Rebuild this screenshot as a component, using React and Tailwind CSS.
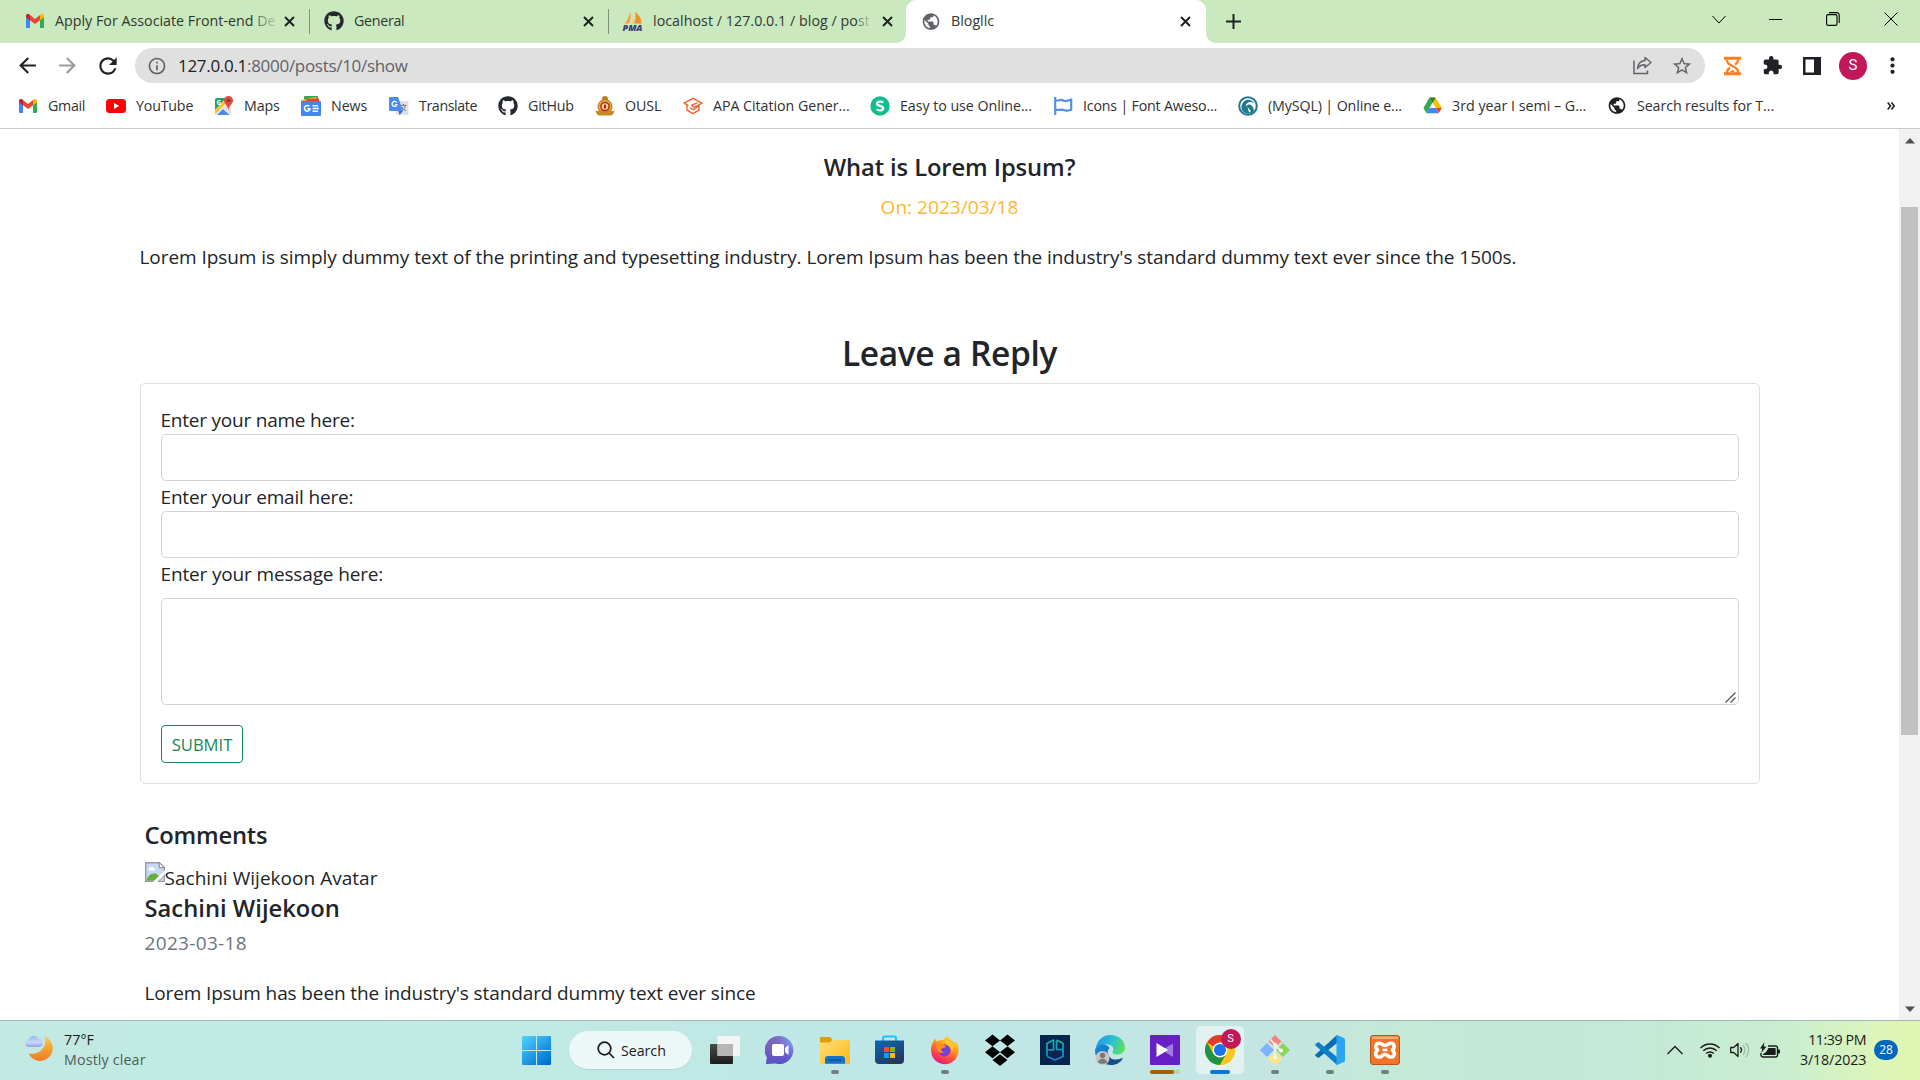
import React from 'react';
import { FaGithub, FaDropbox } from 'react-icons/fa';
import {
  MdArrowBack,
  MdArrowForward,
  MdRefresh,
  MdInfoOutline,
  MdStarBorder,
  MdExtension,
  MdMoreVert,
  MdPublic,
} from 'react-icons/md';

/* ---------- favicons ---------- */

const Gmail = () => (
  <svg width="18" height="14" viewBox="0 0 18 14" className="shrink-0">
    <path d="M0 2v11a1 1 0 0 0 1 1h3V5z" fill="#4285f4" />
    <path d="M18 2v11a1 1 0 0 1-1 1h-3V5z" fill="#34a853" />
    <path d="M4 1l5 4 5-4v5.2L9 10 4 6.200z" fill="#ea4335" />
    <path d="M14 1l1-.7c1.300-1 3 0 3 1.600V3.200l-4 3z" fill="#fbbc04" />
    <path d="M4 1L3 .3C1.700-.7 0 .3 0 1.900V3.200l4 3z" fill="#c5221f" />
  </svg>
);

const YouTube = () => (
  <svg width="20" height="20" viewBox="0 0 20 20" className="shrink-0">
    <rect x="0" y="3" width="20" height="14" rx="3.500" fill="#f00" />
    <path d="M8 7l5.200 3L8 13z" fill="#fff" />
  </svg>
);

const Maps = () => (
  <svg width="20" height="20" viewBox="0 0 20 20" className="shrink-0">
    <rect x="1" y="2" width="16" height="17" rx="2" fill="#e8eaed" />
    <path d="M1 4a2 2 0 0 1 2-2h9L1 14z" fill="#1ea362" />
    <path d="M1 14L13 2l2 2L1 18.500z" fill="#fbc02d" />
    <path d="M3 19l6-6 6.500 6z" fill="#4a89f3" />
    <path d="M10 12l3-3 4 4v4z" fill="#dadce0" />
    <text x="2.500" y="9" fontSize="6.500" fill="#fff" fontWeight="700" fontFamily="Open Sans">G</text>
    <path d="M14.500 0a4.500 4.500 0 0 1 4.500 4.500c0 3.500-3.800 4.500-4.500 9.500-.7-5-4.500-6-4.500-9.500A4.500 4.500 0 0 1 14.500 0z" fill="#dd4b3e" />
    <circle cx="14.500" cy="4.500" r="1.600" fill="#822f2b" />
  </svg>
);

const News = () => (
  <svg width="20" height="20" viewBox="0 0 20 20" className="shrink-0">
    <rect x="3" y="0" width="14" height="8" rx="1" fill="#34a853" />
    <path d="M0 4l15-3 2 7H1z" fill="#fbbc04" />
    <path d="M5 3l13-.5V8H6z" fill="#ea4335" />
    <rect x="0" y="5" width="20" height="15" rx="1" fill="#4285f4" />
    <path d="M8.300 10.400A2.800 2.800 0 1 0 9 12.800H6.300" fill="none" stroke="#fff" strokeWidth="1.600" />
    <path d="M11.500 9.700H17M11.500 12.500H17.800M11.500 15.300H17" stroke="#fff" strokeWidth="1.500" />
  </svg>
);

const Translate = () => (
  <svg width="20" height="20" viewBox="0 0 20 20" className="shrink-0">
    <rect x="7" y="5" width="12.500" height="14" rx="1.200" fill="#dfe1e5" />
    <path d="M1.200 1H9l5 14H1.200A1.200 1.200 0 0 1 0 13.800V2.200A1.200 1.200 0 0 1 1.200 1z" fill="#4c8bf5" />
    <path d="M9.500 15H14l-3.500 4z" fill="#3367d6" />
    <path d="M7.700 6.600a2.500 2.500 0 1 0 .3 2H5.800" fill="none" stroke="#fff" strokeWidth="1.200" />
    <path d="M11.500 9.300h6M14.500 8v1.300M16.500 9.500c-.5 2.500-2 4-3.800 5M13 11c.8 2 2.300 3 4 3.800" fill="none" stroke="#6b7785" strokeWidth="1" />
  </svg>
);

const Ousl = () => (
  <svg width="20" height="20" viewBox="0 0 20 20" className="shrink-0">
    <path d="M7 2.500a3 2.500 0 0 1 6 0l-.5 3h-5z" fill="#b8862a" />
    <circle cx="10" cy="10.500" r="7" fill="#e8a82c" stroke="#b8731a" />
    <path d="M.5 14.500c1.500 1 3 .5 4-.5h11c1 1 2.500 1.500 4 .5-.5 3-2 5-4.500 5H5c-2.500 0-4-2-4.500-5z" fill="#c98a24" />
    <circle cx="10" cy="10.500" r="4.800" fill="#b3301c" />
    <circle cx="10" cy="10.500" r="3.300" fill="#f0d9b0" />
    <path d="M10 7.800c2 2.200 2 4.400 0 5.200-2-.8-2-3 0-5.200z" fill="#c62a1b" />
  </svg>
);

const Citation = () => (
  <svg width="20" height="20" viewBox="0 0 20 20" className="shrink-0" fill="none" stroke="#f4602f" strokeWidth="1.400" strokeLinejoin="round" strokeLinecap="round">
    <path d="M5 9.500L1 7.200 10 2.300l9 4.900-6.300 3.500a2.700 2.700 0 0 1-4-1.500l5.300-2.300" />
    <path d="M4 9v5.200l5.800 3.500 6.200-3.500V9.500l-5.500 4.200L7.500 12" />
  </svg>
);

const Shutter = () => (
  <svg width="20" height="20" viewBox="0 0 20 20" className="shrink-0">
    <circle cx="10" cy="10" r="9.700" fill="#0dbf8c" />
    <path d="M13.300 6.700C12 5.300 7 5.100 7 7.800c0 2.600 6.200 1.700 6.200 4.500 0 2.700-5 2.700-6.500.8" fill="none" stroke="#fff" strokeWidth="2.300" />
  </svg>
);

const Flag = () => (
  <svg width="20" height="20" viewBox="0 0 20 20" className="shrink-0" fill="none" stroke="#5490e8" strokeWidth="2.200">
    <path d="M2.200 1v18" />
    <path d="M2.200 4.500h4c2-2 4 1 7 .5 2-.4 3.500-1 5-1.300v10c-2 .8-4.500 1.500-6.500.6-2.500-1-4-.8-5.500-.4h-4" />
  </svg>
);

const Creately = () => (
  <svg width="20" height="20" viewBox="0 0 20 20" className="shrink-0">
    <circle cx="10" cy="10" r="8.800" fill="#fff" stroke="#21788f" strokeWidth="2" />
    <path d="M16 15A7 7 0 1 1 16.500 7.500C13 4.500 8 6 7.700 10.200L10 8.700c3-.6 5.500 2 6 6.300z" fill="#21788f" />
    <path d="M9.500 11l1.500 5.500 2-1.200z" fill="#fff" />
  </svg>
);

const Drive = () => (
  <svg width="19" height="19" viewBox="0 0 19 19" className="shrink-0">
    <path d="M6.500 1.500L.5 12l3 5.300L9.500 7z" fill="#34a853" />
    <path d="M12.500 1.500h-6L12.800 12h6z" fill="#fbbc04" />
    <path d="M6.500 1.500h6L9.500 7z" fill="#188038" />
    <path d="M3.500 17.300L6.500 12h6.300l2.900 5.300z" fill="#4285f4" />
    <path d="M12.800 12h6l-3.100 5.300z" fill="#ea4335" />
    <path d="M9.500 7l3 5h-6z" fill="#fff" />
  </svg>
);

const PhpMyAdmin = () => (
  <svg width="20" height="20" viewBox="0 0 20 20" className="shrink-0 overflow-visible">
    <path d="M7 0c1.500 5 .8 9-1 12.500H1.500C5 9 6.500 5 7 0z" fill="#f9a13a" />
    <path d="M12 1c5 3.500 6.500 7 6.500 11.500H11C12.500 9 13 5 12 1z" fill="#f6921e" />
    <path d="M9.500 3c.8 3.500.5 6.500-1 9.500H10c1-3 1-6-.5-9.500z" fill="#fbc26b" />
    <text x="-0.5" y="19.500" fontSize="8" fontWeight="800" fontStyle="italic" fontFamily="Open Sans" fill="#3b3d74" textLength="20" lengthAdjust="spacingAndGlyphs">PMA</text>
  </svg>
);

/* ---------- browser chrome ---------- */

function Tab({ icon, title }) {
  return (
    <div className="flex h-[43px] w-[299px] shrink-0 items-center pb-[1px]">
      <div className="flex w-[20px] shrink-0 justify-center">{icon}</div>
      <div className="ml-[10px] w-[220px] whitespace-nowrap">{title}</div>
      <svg className="ml-[9px] shrink-0" width="11" height="11" viewBox="0 0 11 11" stroke="#202124" strokeWidth="2"><path d="M1 1l9 9M10 1l-9 9" /></svg>
    </div>
  );
}

const Faded = ({ children }) => (
  <span className="[mask-image:linear-gradient(90deg,rgba(0,0,0,0.7),rgba(0,0,0,0.15))]">{children}</span>
);

function TabStrip() {
  return (
    <div className="flex h-[43px] bg-[#cae9bf] text-[14.25px] text-[#30382e]">
      <div className="flex w-[309px] items-center pl-[25px]">
        <Tab icon={<Gmail />} title={<span className="tracking-[0.01px]">Apply For Associate Front-end <Faded>De</Faded></span>} />
      </div>
      <div className="mt-[9px] h-[25px] w-px bg-[#7f9478]" />
      <div className="flex w-[298px] items-center overflow-hidden pl-[14px]">
        <Tab icon={<FaGithub className="h-[20px] w-[20px] text-[#24292f]" />} title={<span className="tracking-[-0.3px]">General</span>} />
      </div>
      <div className="mt-[9px] h-[25px] w-px bg-[#7f9478]" />
      <div className="flex w-[297px] items-center overflow-hidden pl-[14px]">
        <Tab icon={<PhpMyAdmin />} title={<span className="tracking-[0.04px]">localhost / 127.0.0.1 / blog / po<Faded>st</Faded></span>} />
      </div>
      <div className="relative flex w-[300px] items-center rounded-t-[10px] bg-white pl-[15px]">
        <svg className="absolute bottom-0 -left-[10px]" width="10" height="10"><path d="M10 0v10H0A10 10 0 0 0 10 0z" fill="#fff" /></svg>
        <svg className="absolute -right-[10px] bottom-0" width="10" height="10"><path d="M0 0v10h10A10 10 0 0 1 0 0z" fill="#fff" /></svg>
        <Tab icon={<MdPublic className="h-[21px] w-[21px] text-[#5f6368]" />} title={<span>Blogllc</span>} />
      </div>
      <div className="flex items-center pb-[1px] pl-[20px]">
        <svg width="15" height="15" viewBox="0 0 15 15" stroke="#202124" strokeWidth="2"><path d="M7.500 0v15M0 7.500h15" /></svg>
      </div>
      <div className="ml-auto flex h-[37px] items-center gap-[44px] pr-[22px] text-black">
        <svg className="-mr-[1px]" width="14" height="14" viewBox="0 0 14 14" fill="none" stroke="currentColor"><path d="M.5 4L7 11l6.500-7" /></svg>
        <svg width="13" height="14" viewBox="0 0 13 14" fill="none" stroke="currentColor"><path d="M0 7.500h13" /></svg>
        <svg width="14" height="14" viewBox="0 0 14 14" fill="none" stroke="currentColor" strokeWidth="1.100"><rect x=".6" y="2.600" width="10.400" height="10.800" rx="1.500" /><path d="M3 .6h7.500a2.500 2.500 0 0 1 2.700 2.700V11" /></svg>
        <svg width="14" height="14" viewBox="0 0 14 14" fill="none" stroke="currentColor"><path d="M.5.5l13 13M13.500.5l-13 13" /></svg>
      </div>
    </div>
  );
}

function AddressBar() {
  return (
    <div className="flex h-[45px] items-center pl-[15px]">
      <MdArrowBack className="h-[25px] w-[25px] text-[#202124]" />
      <MdArrowForward className="ml-[15px] h-[25px] w-[25px] text-[#9a9c9e]" />
      <MdRefresh className="ml-[15px] h-[26px] w-[26px] text-[#202124]" />
      <div className="ml-[14px] flex h-[35px] w-[1570px] items-center rounded-full bg-[#e0e0e0] pl-[12px]">
        <MdInfoOutline className="h-[20px] w-[20px] text-[#5f6368]" />
        <div className="ml-[11px] text-[17px] tracking-[-0.3px] text-[#5f6368]">
          <span className="text-[#202124]">127.0.0.1</span>:8000/posts/10/show
        </div>
        <svg className="mr-[18px] ml-auto" width="20" height="19" viewBox="0 0 20 19" fill="none" stroke="#5f6368" strokeWidth="1.500">
          <path d="M1 4.500v13h13.500v-3" />
          <path d="M12 1.500l6 5-6 5V8.700c-3.500 0-6 1.300-7.500 4 .3-4.500 3-7.700 7.500-8.200z" strokeLinejoin="round" />
        </svg>
        <MdStarBorder className="mr-[12px] h-[22px] w-[22px] text-[#5f6368]" />
      </div>
      <svg className="ml-[18px]" width="19" height="20" viewBox="0 0 19 20" fill="none" stroke="#ff7f1e">
        <path d="M1 2.200h17M1 17.800h17" strokeWidth="3" />
        <path d="M4 3.500c0 4 1.500 4.500 5.500 6.500s5.500 3 5.500 7M15 3.500c0 3-1 4-3 5M4 17c0-3 .8-4 3-5.200" strokeWidth="2.300" />
        <path d="M6.500 16.500l3-3 3 3z" fill="#ff7f1e" stroke="none" />
      </svg>
      <MdExtension className="ml-[20px] h-[21px] w-[21px] text-[#202124]" />
      <svg className="ml-[20px]" width="18" height="18" viewBox="0 0 18 18"><path d="M1.250 1.250h15.500v15.500H1.250z" fill="none" stroke="#202124" strokeWidth="2.500" /><path d="M11 1h6v16h-6z" fill="#202124" /></svg>
      <div className="ml-[18px] flex h-[28px] w-[28px] items-center justify-center rounded-full bg-[#c2185b] font-[Roboto] text-[15px] text-white">S</div>
      <MdMoreVert className="ml-[13px] h-[25px] w-[25px] text-[#202124]" />
    </div>
  );
}

function Bookmark({ icon, label, className }) {
  return (
    <div className={`flex shrink-0 items-center whitespace-nowrap ${className}`}>
      <div className="mr-[10px] flex w-[20px] justify-center">{icon}</div>
      {label}
    </div>
  );
}

function Bookmarks() {
  return (
    <div className="flex h-[41px] items-center border-b border-[#c8c9c8] pb-[5px] pl-[18px] text-[14.25px] text-[#303134]">
      <Bookmark className="w-[88px] tracking-[-0.3px]" icon={<Gmail />} label="Gmail" />
      <Bookmark className="w-[108px] tracking-[-0.2px]" icon={<YouTube />} label="YouTube" />
      <Bookmark className="w-[87px] tracking-[-0.15px]" icon={<Maps />} label="Maps" />
      <Bookmark className="w-[88px] tracking-[-0.1px]" icon={<News />} label="News" />
      <Bookmark className="w-[109px] tracking-[-0.4px]" icon={<Translate />} label="Translate" />
      <Bookmark className="w-[97px] tracking-[-0.2px]" icon={<FaGithub className="h-[20px] w-[20px] text-[#24292f]" />} label="GitHub" />
      <Bookmark className="w-[88px] tracking-[-0.1px]" icon={<Ousl />} label="OUSL" />
      <Bookmark className="w-[187px] tracking-[-0.05px]" icon={<Citation />} label="APA Citation Gener..." />
      <Bookmark className="w-[183px] tracking-[-0.05px]" icon={<Shutter />} label="Easy to use Online..." />
      <Bookmark className="w-[185px] tracking-[-0.2px]" icon={<Flag />} label="Icons | Font Aweso..." />
      <Bookmark className="w-[184px] tracking-[-0.13px]" icon={<Creately />} label="(MySQL) | Online e..." />
      <Bookmark className="w-[185px]" icon={<Drive />} label="3rd year I semi – G..." />
      <Bookmark className="tracking-[-0.1px]" icon={<MdPublic className="h-[21px] w-[21px] text-[#202124]" />} label="Search results for T..." />
      <svg className="mr-[25px] ml-auto" width="8" height="8" viewBox="0 0 8 8" fill="none" stroke="#202124" strokeWidth="1.600"><path d="M.7.6L3.500 4 .7 7.400M4.400.6L7.200 4 4.400 7.400" /></svg>
    </div>
  );
}

/* ---------- page ---------- */

const BrokenImage = () => (
  <svg width="20" height="20" viewBox="0 0 20 20" className="shrink-0">
    <path d="M.7.7h13.600l5 5v13.600H.7z" fill="#c6d8f7" stroke="#9b9b9b" strokeWidth="1.400" />
    <path d="M4 8.500a2 2 0 0 1 1.500-3 2 2 0 0 1 3.500.5 1.500 1.500 0 0 1 .5 2.500z" fill="#fff" />
    <path d="M1.400 18.600c1-4 4-7 7.600-7s5 2 6.500 7z" fill="#5fb03c" />
    <path d="M14.300.7v5h5z" fill="#fff" stroke="#9b9b9b" strokeWidth="1.200" />
    <path d="M9.500 20.500L20.500 9.500" stroke="#fff" strokeWidth="3" />
    <path d="M14 19.300h5.300V14.500z" fill="#c6d8f7" stroke="#9b9b9b" strokeWidth=".8" />
  </svg>
);

function Page() {
  return (
    <main className="flex h-[891px] w-[1899px] flex-col overflow-hidden bg-white px-[139px] pt-[23px] text-[19px] leading-[30px] text-[#212529]">
      <h4 className="text-center text-[23.75px] leading-[30px] font-[560] tracking-[-0.09px]">What is Lorem Ipsum?</h4>
      <p className="mt-[10px] text-center tracking-[0.05px] text-[#fdb72f]">On: 2023/03/18</p>
      <p className="mt-[20px] ml-[0.5px] tracking-[-0.065px] whitespace-nowrap">Lorem Ipsum is simply dummy text of the printing and typesetting industry. Lorem Ipsum has been the industry&apos;s standard dummy text ever since the 1500s.</p>
      <h3 className="mt-[60px] text-center text-[33.5px] leading-[42px] font-[560] tracking-[-0.35px]">Leave a Reply</h3>
      <form className="mt-[9px] ml-[1px] flex h-[401px] w-[1620px] flex-col rounded-[5px] border border-[#dfdfdf] px-[20px] pt-[20px]">
        <label className="-ml-[0.5px] translate-y-[1px] tracking-[-0.22px]">Enter your name here:</label>
        <input className="h-[47px] rounded-[5px] border border-[#ced4da]" />
        <label className="-ml-[0.5px] translate-y-[1px] tracking-[-0.18px]">Enter your email here:</label>
        <input className="h-[47px] rounded-[5px] border border-[#ced4da]" />
        <label className="-ml-[0.5px] translate-y-[1px] tracking-[-0.15px]">Enter your message here:</label>
        <div className="relative mt-[10px] flex flex-col">
          <textarea className="h-[107px] resize-none rounded-[5px] border border-[#ced4da]" />
          <svg className="absolute right-[3px] bottom-[2px]" width="11" height="11" viewBox="0 0 11 11" stroke="#555" strokeWidth="1.300"><path d="M.5 10.500l10-10M5.500 10.500l5-5" /></svg>
        </div>
        <button type="button" className="mt-[20px] h-[38px] w-[82px] rounded-[4px] border border-[#198754] pt-[1px] text-[16.6px] leading-[35px] text-[#198754]">SUBMIT</button>
      </form>
      <section className="mt-[36px] flex flex-col pl-[5.5px]">
        <h4 className="text-[23.75px] leading-[30px] font-[560] tracking-[-0.22px]">Comments</h4>
        <div className="mt-[12px] flex h-[31px]">
          <BrokenImage />
          <span className="translate-y-[1px] tracking-[0.03px]">Sachini Wijekoon Avatar</span>
        </div>
        <h4 className="text-[23.75px] leading-[30px] font-[560] tracking-[0.01px]">Sachini Wijekoon</h4>
        <p className="mt-[5px] tracking-[0.33px] text-[#6c757d]">2023-03-18</p>
        <p className="mt-[20px] tracking-[-0.115px]">Lorem Ipsum has been the industry&apos;s standard dummy text ever since</p>
      </section>
    </main>
  );
}

function Scrollbar() {
  return (
    <div className="flex h-[891px] w-[21px] flex-col items-center bg-[#f1f1f1]">
      <svg className="mt-[9px]" width="10" height="6"><path d="M0 5.500L5 0l5 5.500z" fill="#505050" /></svg>
      <div className="mt-[63px] h-[528px] w-[17px] bg-[#c1c1c1]" />
      <svg className="mt-auto mb-[8px]" width="10" height="6"><path d="M0 .5L5 6l5-5.500z" fill="#505050" /></svg>
    </div>
  );
}

/* ---------- taskbar ---------- */

const Weather = () => (
  <svg width="28" height="28" viewBox="0 0 28 28">
    <defs>
      <linearGradient id="moon" x1="0" y1="0" x2="0" y2="1"><stop offset="0" stopColor="#fbc94a" /><stop offset="1" stopColor="#ee7a22" /></linearGradient>
      <linearGradient id="cloud" x1="0" y1="0" x2="0" y2="1"><stop offset="0" stopColor="#8fb1ec" /><stop offset=".55" stopColor="#c9d9f8" /><stop offset="1" stopColor="#8fa6e4" /></linearGradient>
    </defs>
    <path d="M20 2.500A12.700 12.700 0 1 1 3.500 19.500C13 21.500 22.500 14 20 2.500z" fill="url(#moon)" />
    <path d="M4 13a3.700 3.700 0 0 1 0-7.400A5 5 0 0 1 13.300 4.700 4.200 4.200 0 0 1 14.500 13z" fill="url(#cloud)" />
  </svg>
);

const Windows = () => (
  <svg width="29" height="29" viewBox="0 0 29 29">
    <defs><linearGradient id="win" gradientUnits="userSpaceOnUse" x1="0" y1="0" x2="24" y2="29"><stop offset="0" stopColor="#50d3fd" /><stop offset="1" stopColor="#0070d0" /></linearGradient></defs>
    <path d="M1 0h13v14H0V1a1 1 0 0 1 1-1zM15 0h13a1 1 0 0 1 1 1v13H15zM0 15h14v14H1a1 1 0 0 1-1-1zM15 15h14v13a1 1 0 0 1-1 1H15z" fill="url(#win)" />
  </svg>
);

const TaskView = () => (
  <svg width="30" height="28" viewBox="0 0 30 28">
    <defs><linearGradient id="tvd" x1="0" y1="0" x2="0" y2="1"><stop offset="0" stopColor="#4a4a47" /><stop offset="1" stopColor="#1d1d1d" /></linearGradient></defs>
    <rect x="0" y="8" width="23" height="20" rx="1" fill="url(#tvd)" />
    <rect x="7.500" y="0" width="22.500" height="20" rx="1" fill="#f3f4f4" />
    <path d="M7.500 8H23v12H8.500a1 1 0 0 1-1-1z" fill="#b5b6b5" />
  </svg>
);

const Chat = () => (
  <svg width="30" height="30" viewBox="0 0 30 30">
    <defs>
      <linearGradient id="chat" x1="0" y1=".5" x2="1" y2=".2"><stop offset="0" stopColor="#7d62b5" /><stop offset=".5" stopColor="#7c6ac4" /><stop offset="1" stopColor="#7d9dee" /></linearGradient>
      <linearGradient id="chat2" x1="0" y1="0" x2="0" y2="1"><stop offset=".3" stopColor="#5a50c8" stopOpacity="0" /><stop offset="1" stopColor="#5650c8" /></linearGradient>
    </defs>
    <path d="M15 1a14 14 0 1 1-5 27.300L1 29l1-6.500A14 14 0 0 1 15 1z" fill="url(#chat)" />
    <path d="M15 1a14 14 0 1 1-5 27.300L1 29l1-6.500A14 14 0 0 1 15 1z" fill="url(#chat2)" />
    <rect x="7" y="9" width="12" height="12" rx="2" fill="#fff" />
    <path d="M20 13l3.500-3v10L20 17z" fill="#fff" />
  </svg>
);

const Explorer = () => (
  <svg width="30" height="28" viewBox="0 0 30 28">
    <defs><linearGradient id="fold" x1="0" y1="0" x2="1" y2="1"><stop offset="0" stopColor="#ffe07a" /><stop offset="1" stopColor="#fdb813" /></linearGradient></defs>
    <path d="M0 2a1 1 0 0 1 1-1h9l2.500 2.500L10 7H0z" fill="#e19c0a" />
    <path d="M0 6.500h10L13 4h16a1 1 0 0 1 1 1v22a.7.7 0 0 1-1 .7H1a1 1 0 0 1-1-1z" fill="url(#fold)" />
    <path d="M5 27.700V23a3 3 0 0 1 3-3h14a3 3 0 0 1 3 3v4.700z" fill="#1673c9" />
    <path d="M8.500 24h13" stroke="#0b4a8f" strokeWidth="1.200" />
  </svg>
);

const Store = () => (
  <svg width="29" height="30" viewBox="0 0 29 30">
    <defs><linearGradient id="store" x1="0" y1="0" x2=".6" y2="1"><stop offset="0" stopColor="#0669bb" /><stop offset="1" stopColor="#27375e" /></linearGradient></defs>
    <path d="M8 7V3a1.500 1.500 0 0 1 1.500-1.500h10A1.500 1.500 0 0 1 21 3v4" fill="none" stroke="#1fc3f7" strokeWidth="2" />
    <path d="M0 5.500h29V25a4 4 0 0 1-4 4H4a4 4 0 0 1-4-4z" fill="url(#store)" />
    <path d="M9 12h5v5H9z" fill="#f25022" /><path d="M15 12h5v5h-5z" fill="#7fba00" /><path d="M9 18h5v5H9z" fill="#00a4ef" /><path d="M15 18h5v5h-5z" fill="#ffb900" />
  </svg>
);

const Firefox = () => (
  <svg width="30" height="30" viewBox="0 0 30 30">
    <defs>
      <linearGradient id="ff" x1=".8" y1="0" x2=".3" y2="1"><stop offset="0" stopColor="#ffe833" /><stop offset=".4" stopColor="#ff9a1f" /><stop offset=".75" stopColor="#ff4048" /><stop offset="1" stopColor="#e0158a" /></linearGradient>
      <radialGradient id="ffp"><stop offset="0" stopColor="#5a4fe0" /><stop offset="1" stopColor="#8f35c8" /></radialGradient>
    </defs>
    <path d="M3 7l2-3.500 2 3C9 5 11 5 13 5c1.500 0 2.500-3.500 4-4.500 1 3 6 4.500 8 8l1-2c2 3 3 6.500 2.500 10A13.700 13.700 0 0 1 1.200 17C.7 13 1.500 9.500 3 7z" fill="url(#ff)" />
    <path d="M14 6c4-1 8 1 9.500 5l-1 5z" fill="#ffd43a" opacity=".7" />
    <circle cx="14.500" cy="15.500" r="6" fill="url(#ffp)" />
    <path d="M6 11c2-2 4-1.500 5.500-.5 1.500-1 4 0 4.500 1-1.500 1.500-3 1.500-4.500 2.200-.7 1.800.5 3 2.500 3.300-2 2-6 1-7-2z" fill="#ff8a1f" />
  </svg>
);

const Pg = () => (
  <svg width="30" height="30" viewBox="0 0 30 30">
    <defs><linearGradient id="pg" x1="0" y1="0" x2="0" y2="1"><stop offset="0" stopColor="#18b5a6" /><stop offset="1" stopColor="#1e7fd6" /></linearGradient></defs>
    <rect width="30" height="30" fill="#06244c" />
    <path d="M7 21V8.500L13.500 5V15H7M16.500 5L23 8.500V21M23 14.500h-6.500V6M7 21.500L15 25l8-3.500v-4" fill="none" stroke="url(#pg)" strokeWidth="1.700" strokeLinejoin="round" />
  </svg>
);

const Edge = () => (
  <svg width="30" height="30" viewBox="0 0 30 30">
    <defs>
      <linearGradient id="eg" x1="0" y1=".3" x2="1" y2=".6"><stop offset="0" stopColor="#2095dd" /><stop offset=".5" stopColor="#2bbfd6" /><stop offset="1" stopColor="#5fe05a" /></linearGradient>
      <linearGradient id="eb" x1="0" y1="0" x2="1" y2="1"><stop offset="0" stopColor="#1b8fe0" /><stop offset="1" stopColor="#0c4e94" /></linearGradient>
    </defs>
    <path d="M1 13C2 5.500 8 0 15 0c9 0 15 6 15 12.500 0 4.500-3.500 7-7.500 7-4 0-5.500-1.500-4.800-2.700 2-3 0-7.300-5.200-7.300C7 9.500 3 10 1 13z" fill="url(#eg)" />
    <path d="M0 15c1-4 5-6.500 9.500-5.500 3 .7 4.500 2 5 3.500-4 4-2 12 4 13.500 3.500.8 7-.5 9.500-3C25 28 20 30 15 30 6.500 30-.5 23 0 15z" fill="url(#eb)" />
    <path d="M13 17c0 5 4 8 8 7.500 3 0 5-1 7-2-2 5-7 7.500-13 7.500-4-3-5-9-2-13z" fill="#164f86" />
    <circle cx="7.500" cy="23" r="7" fill="#c9c7c4" />
    <circle cx="7.500" cy="20.500" r="2.700" fill="#7b7975" /><path d="M3 27.500c0-5 9-5 9 0-2.500 1.800-6.500 1.800-9 0z" fill="#7b7975" />
  </svg>
);

const Media = () => (
  <svg width="30" height="30" viewBox="0 0 30 30">
    <rect width="30" height="30" rx="1" fill="#6620c6" />
    <path d="M23 8.500v13.500L12 15z" fill="#a37be0" />
    <path d="M6.500 8v14L18 15z" fill="#fff" />
  </svg>
);

const Chrome = () => (
  <svg width="30" height="30" viewBox="0 0 30 30">
    <circle cx="15" cy="15" r="15" fill="#fbbc05" />
    <path d="M15 15L2 7.500A15 15 0 0 1 28 7.500H15z" fill="#e33b2e" />
    <path d="M2 7.500A15 15 0 0 0 15 30l6.500-11.200L15 15l-6.500 3.700z" fill="#229342" />
    <path d="M15 7.500h13A15 15 0 0 1 15 30l6.500-11.200z" fill="#fcc61c" />
    <circle cx="15" cy="15" r="7.500" fill="#fff" /><circle cx="15" cy="15" r="6" fill="#1a73e8" />
  </svg>
);

const Git = () => (
  <svg width="30" height="30" viewBox="0 0 30 30">
    <path d="M15 0l6.500 6.500-6.500 6-6.500-6z" fill="#f98080" />
    <path d="M7 8l7 7-7 7-7-7z" fill="#80b3ff" />
    <path d="M23 8l7 7-7 7-7-7z" fill="#8cd35f" />
    <path d="M15 17l7 6.500-7 6.500-7-6.500z" fill="#ffe680" />
    <path d="M10.500 4.500L15 9.500v13M15 10l6 5.500" fill="none" stroke="#eef4e8" strokeWidth="1.800" />
    <circle cx="15" cy="9.500" r="2.100" fill="#f3f5ee" /><circle cx="15" cy="22.500" r="2.100" fill="#f3f5ee" /><circle cx="21" cy="15.500" r="2.100" fill="#f3f5ee" />
  </svg>
);

const VsCode = () => (
  <svg width="30" height="30" viewBox="0 0 30 30">
    <path d="M22 0v8L3.500 23 .5 21a1 1 0 0 1 0-1.500z" fill="#0a6cb8" />
    <path d="M22 30v-8L3.500 7 .5 9a1 1 0 0 0 0 1.500z" fill="#0f7fcb" />
    <path d="M22 0l7 3a2 2 0 0 1 1 1.700v20.600a2 2 0 0 1-1 1.700l-7 3c-.7 0-.5-.5-.5-1V1c0-.5 0-1 .5-1z" fill="#2aa5f3" />
  </svg>
);

const Xampp = () => (
  <svg width="30" height="30" viewBox="0 0 30 30">
    <rect x=".5" y=".5" width="29" height="29" rx="2.500" fill="#f0742a" stroke="#b9541b" />
    <path d="M2 1.500h26v2.500H2z" fill="#f9a878" />
    <path d="M10.500 8.500c-5-1-6 4-2.800 6.500C4 18 5.500 23 10.500 21.800c1.500-.4 2-2.300 4.500-2.300s3 1.900 4.500 2.300c5 1.200 6.500-3.800 2.800-6.800 3.200-2.500 2.200-7.500-2.800-6.500-1.700.4-2.500 2-4.500 2s-2.800-1.600-4.500-2z" fill="none" stroke="#fff" strokeWidth="3.500" strokeLinejoin="round" />
    <path d="M12.500 15h5" stroke="#fff" strokeWidth="2.600" />
  </svg>
);

function TaskbarApp({ children, indicator }) {
  return (
    <div className="flex h-[58px] w-[55px] shrink-0 flex-col items-center">
      <div className="mt-[14px] flex h-[30px] items-center justify-center">{children}</div>
      {indicator && <div className="mt-[5px] h-[4px] w-[8px] rounded-full bg-[#6d807d]" />}
    </div>
  );
}

function Taskbar() {
  return (
    <footer className="flex h-[60px] border-t border-[#9fb8b3] bg-[linear-gradient(90deg,#c2e9e2_0%,#c0ebe2_15%,#c0e9e5_33%,#bfe7e6_52%,#c5e5e3_65%,#c4e9d7_73%,#c5e8d7_86%,#caeecf_93%,#dcf5b8_98%,#e2f6b0_100%)] text-[14.25px] text-[#1b1b1b]">
      <div className="flex w-[522px] pt-[13px] pl-[25px]">
        <Weather />
        <div className="-mt-[4px] ml-[11px] leading-[20px]">
          <div className="tracking-[0.05px]">77°F</div>
          <div className="tracking-[0.15px] text-[#4d5d5a]">Mostly clear</div>
        </div>
      </div>
      <div className="mt-[15px] w-[47px]"><Windows /></div>
      <div className="mt-[10px] flex h-[38px] w-[123px] items-center rounded-full bg-[#ecf8f7] pl-[28px] shadow-[0_1px_1px_rgba(0,0,0,0.08)]">
        <svg width="18" height="18" viewBox="0 0 18 18" fill="none" stroke="#1b1b1b" strokeWidth="1.700"><circle cx="7.500" cy="7.500" r="6.300" /><path d="M12 12l5 5" /></svg>
        <span className="ml-[6px] pt-[1px] tracking-[-0.05px]">Search</span>
      </div>
      <div className="ml-[5px] flex">
        <TaskbarApp><TaskView /></TaskbarApp>
        <TaskbarApp><Chat /></TaskbarApp>
        <TaskbarApp indicator><Explorer /></TaskbarApp>
        <TaskbarApp><Store /></TaskbarApp>
        <TaskbarApp indicator><Firefox /></TaskbarApp>
        <TaskbarApp><FaDropbox className="h-[32px] w-[30px] text-black" preserveAspectRatio="none" viewBox="0 25 528 455" /></TaskbarApp>
        <TaskbarApp><Pg /></TaskbarApp>
        <TaskbarApp><Edge /></TaskbarApp>
        <div className="flex h-[58px] w-[55px] flex-col items-center pt-[14px]">
          <Media />
          <div className="mt-[5px] flex h-[4px] w-[30px] rounded-full bg-[#b3cdca]"><div className="h-[4px] w-[24px] rounded-full bg-[#a55e00]" /></div>
        </div>
        <div className="flex h-[58px] w-[55px] flex-col items-center pt-[5px]">
          <div className="relative flex h-[48px] w-[48px] flex-col items-center rounded-[5px] bg-[#e2f2f0] pt-[9px]">
            <Chrome />
            <div className="absolute top-[3px] right-[3px] flex h-[20px] w-[20px] items-center justify-center rounded-full bg-[#c2185b] font-[Roboto] text-[11px] text-white">S</div>
            <div className="mt-[5px] h-[4px] w-[20px] rounded-full bg-[#0a78d4]" />
          </div>
        </div>
        <TaskbarApp indicator><Git /></TaskbarApp>
        <TaskbarApp indicator><VsCode /></TaskbarApp>
        <TaskbarApp indicator><Xampp /></TaskbarApp>
      </div>
      <div className="ml-auto flex h-[58px] items-center pr-[22px]">
        <svg width="16" height="10" viewBox="0 0 16 10" fill="none" stroke="#1b1b1b" strokeWidth="1.300"><path d="M.5 9L8 1.500 15.500 9" /></svg>
        <svg className="ml-[17px]" width="20" height="16" viewBox="0 0 20 16" fill="none" stroke="#1b1b1b" strokeWidth="1.400"><path d="M.5 6a13.200 13.200 0 0 1 19 0M3.300 8.800a9.400 9.400 0 0 1 13.400 0M6.200 11.500a5.500 5.500 0 0 1 7.600 0" /><circle cx="10" cy="13.800" r="1.300" fill="#1b1b1b" /></svg>
        <svg className="ml-[10px]" width="20" height="16" viewBox="0 0 20 16" fill="none" stroke="#1b1b1b" strokeWidth="1.300"><path d="M.7 5.500h3L8 1.500v13l-4.300-4h-3z" strokeLinejoin="round" /><path d="M10.300 5.300a4 4 0 0 1 0 5.400" /><path d="M13 3.200a7 7 0 0 1 0 9.600M16 1a10.500 10.500 0 0 1 0 14" stroke="#9db8a6" /></svg>
        <svg className="ml-[10px]" width="20" height="17" viewBox="0 0 20 17"><path d="M8 4h7.500a2 2 0 0 1 2 2v7a2 2 0 0 1-2 2H3a2 2 0 0 1-2-2v-2" fill="none" stroke="#1b1b1b" strokeWidth="1.400" /><path d="M8.500 6H15a.7.7 0 0 1 .7.7v5.600a.7.7 0 0 1-.7.7H3.500a.7.7 0 0 1-.7-.7L6 10z" fill="#1b1b1b" /><path d="M18 7.500h1.200a.8.8 0 0 1 .8.800v2.400a.8.8 0 0 1-.8.800H18z" fill="#1b1b1b" /><path d="M4.500 0L0 6.500h2.300L1.300 11 6.500 4.500H3.700z" fill="#1b1b1b" /></svg>
        <div className="ml-[20px] w-[66px] text-right leading-[20px] whitespace-nowrap">
          <div className="tracking-[-0.45px]">11:39 PM</div>
          <div className="tracking-[-0.15px]">3/18/2023</div>
        </div>
        <div className="ml-[8px] flex h-[20px] w-[24px] items-center justify-center rounded-full bg-[#0067c0] text-[12px] leading-[20px] text-white">28</div>
      </div>
    </footer>
  );
}

export default function App() {
  return (
    <div className="h-[1080px] w-[1920px] overflow-hidden bg-white font-['Open_Sans',sans-serif]">
      <TabStrip />
      <AddressBar />
      <Bookmarks />
      <div className="flex">
        <Page />
        <Scrollbar />
      </div>
      <Taskbar />
    </div>
  );
}
